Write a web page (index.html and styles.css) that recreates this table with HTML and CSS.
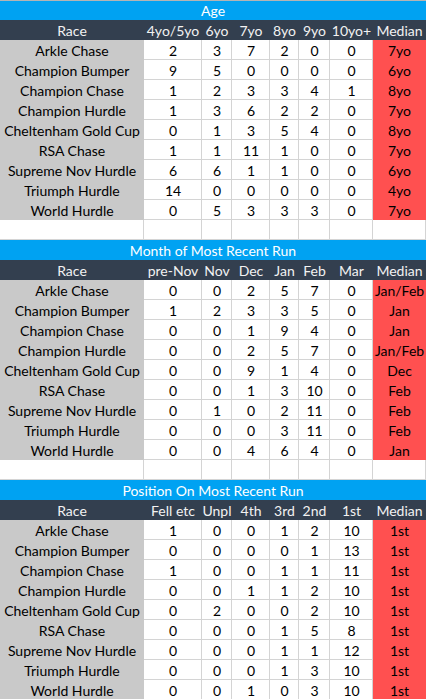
FILE: index.html
```html
<!DOCTYPE html>
<html>
<head>
<meta charset="utf-8">
<link rel="stylesheet" href="styles.css">
</head>
<body>
<table class="sheet">
<colgroup>
<col class="c-race"><col class="c1"><col class="c2"><col class="c3"><col class="c4"><col class="c5"><col class="c6"><col class="c-med">
</colgroup>
<tbody>
<tr class="row first"><td colspan="8" class="title">Age</td></tr>
<tr class="row"><th class="head">Race</th><th class="head">4yo/5yo</th><th class="head">6yo</th><th class="head">7yo</th><th class="head">8yo</th><th class="head">9yo</th><th class="head">10yo+</th><th class="head">Median</th></tr>
<tr class="row"><td class="race">Arkle Chase</td><td class="num">2</td><td class="num">3</td><td class="num">7</td><td class="num">2</td><td class="num">0</td><td class="num">0</td><td class="med">7yo</td></tr>
<tr class="row"><td class="race">Champion Bumper</td><td class="num">9</td><td class="num">5</td><td class="num">0</td><td class="num">0</td><td class="num">0</td><td class="num">0</td><td class="med">6yo</td></tr>
<tr class="row"><td class="race">Champion Chase</td><td class="num">1</td><td class="num">2</td><td class="num">3</td><td class="num">3</td><td class="num">4</td><td class="num">1</td><td class="med">8yo</td></tr>
<tr class="row"><td class="race">Champion Hurdle</td><td class="num">1</td><td class="num">3</td><td class="num">6</td><td class="num">2</td><td class="num">2</td><td class="num">0</td><td class="med">7yo</td></tr>
<tr class="row"><td class="race">Cheltenham Gold Cup</td><td class="num">0</td><td class="num">1</td><td class="num">3</td><td class="num">5</td><td class="num">4</td><td class="num">0</td><td class="med">8yo</td></tr>
<tr class="row"><td class="race">RSA Chase</td><td class="num">1</td><td class="num">1</td><td class="num">11</td><td class="num">1</td><td class="num">0</td><td class="num">0</td><td class="med">7yo</td></tr>
<tr class="row"><td class="race">Supreme Nov Hurdle</td><td class="num">6</td><td class="num">6</td><td class="num">1</td><td class="num">1</td><td class="num">0</td><td class="num">0</td><td class="med">6yo</td></tr>
<tr class="row"><td class="race">Triumph Hurdle</td><td class="num">14</td><td class="num">0</td><td class="num">0</td><td class="num">0</td><td class="num">0</td><td class="num">0</td><td class="med">4yo</td></tr>
<tr class="row"><td class="race">World Hurdle</td><td class="num">0</td><td class="num">5</td><td class="num">3</td><td class="num">3</td><td class="num">3</td><td class="num">0</td><td class="med">7yo</td></tr>
<tr class="row"><td class="blank"></td><td class="blank"></td><td class="blank"></td><td class="blank"></td><td class="blank"></td><td class="blank"></td><td class="blank"></td><td class="blank"></td></tr>

<tr class="row"><td colspan="8" class="title">Month of Most Recent Run</td></tr>
<tr class="row"><th class="head">Race</th><th class="head">pre-Nov</th><th class="head">Nov</th><th class="head">Dec</th><th class="head">Jan</th><th class="head">Feb</th><th class="head">Mar</th><th class="head">Median</th></tr>
<tr class="row"><td class="race">Arkle Chase</td><td class="num">0</td><td class="num">0</td><td class="num">2</td><td class="num">5</td><td class="num">7</td><td class="num">0</td><td class="med">Jan/Feb</td></tr>
<tr class="row"><td class="race">Champion Bumper</td><td class="num">1</td><td class="num">2</td><td class="num">3</td><td class="num">3</td><td class="num">5</td><td class="num">0</td><td class="med">Jan</td></tr>
<tr class="row"><td class="race">Champion Chase</td><td class="num">0</td><td class="num">0</td><td class="num">1</td><td class="num">9</td><td class="num">4</td><td class="num">0</td><td class="med">Jan</td></tr>
<tr class="row"><td class="race">Champion Hurdle</td><td class="num">0</td><td class="num">0</td><td class="num">2</td><td class="num">5</td><td class="num">7</td><td class="num">0</td><td class="med">Jan/Feb</td></tr>
<tr class="row"><td class="race">Cheltenham Gold Cup</td><td class="num">0</td><td class="num">0</td><td class="num">9</td><td class="num">1</td><td class="num">4</td><td class="num">0</td><td class="med">Dec</td></tr>
<tr class="row"><td class="race">RSA Chase</td><td class="num">0</td><td class="num">0</td><td class="num">1</td><td class="num">3</td><td class="num">10</td><td class="num">0</td><td class="med">Feb</td></tr>
<tr class="row"><td class="race">Supreme Nov Hurdle</td><td class="num">0</td><td class="num">1</td><td class="num">0</td><td class="num">2</td><td class="num">11</td><td class="num">0</td><td class="med">Feb</td></tr>
<tr class="row"><td class="race">Triumph Hurdle</td><td class="num">0</td><td class="num">0</td><td class="num">0</td><td class="num">3</td><td class="num">11</td><td class="num">0</td><td class="med">Feb</td></tr>
<tr class="row"><td class="race">World Hurdle</td><td class="num">0</td><td class="num">0</td><td class="num">4</td><td class="num">6</td><td class="num">4</td><td class="num">0</td><td class="med">Jan</td></tr>
<tr class="row"><td class="blank"></td><td class="blank"></td><td class="blank"></td><td class="blank"></td><td class="blank"></td><td class="blank"></td><td class="blank"></td><td class="blank"></td></tr>

<tr class="row"><td colspan="8" class="title">Position On Most Recent Run</td></tr>
<tr class="row"><th class="head">Race</th><th class="head">Fell etc</th><th class="head">Unpl</th><th class="head">4th</th><th class="head">3rd</th><th class="head">2nd</th><th class="head">1st</th><th class="head">Median</th></tr>
<tr class="row"><td class="race">Arkle Chase</td><td class="num">1</td><td class="num">0</td><td class="num">0</td><td class="num">1</td><td class="num">2</td><td class="num">10</td><td class="med">1st</td></tr>
<tr class="row"><td class="race">Champion Bumper</td><td class="num">0</td><td class="num">0</td><td class="num">0</td><td class="num">0</td><td class="num">1</td><td class="num">13</td><td class="med">1st</td></tr>
<tr class="row"><td class="race">Champion Chase</td><td class="num">1</td><td class="num">0</td><td class="num">0</td><td class="num">1</td><td class="num">1</td><td class="num">11</td><td class="med">1st</td></tr>
<tr class="row"><td class="race">Champion Hurdle</td><td class="num">0</td><td class="num">0</td><td class="num">1</td><td class="num">1</td><td class="num">2</td><td class="num">10</td><td class="med">1st</td></tr>
<tr class="row"><td class="race">Cheltenham Gold Cup</td><td class="num">0</td><td class="num">2</td><td class="num">0</td><td class="num">0</td><td class="num">2</td><td class="num">10</td><td class="med">1st</td></tr>
<tr class="row"><td class="race">RSA Chase</td><td class="num">0</td><td class="num">0</td><td class="num">0</td><td class="num">1</td><td class="num">5</td><td class="num">8</td><td class="med">1st</td></tr>
<tr class="row"><td class="race">Supreme Nov Hurdle</td><td class="num">0</td><td class="num">0</td><td class="num">0</td><td class="num">1</td><td class="num">1</td><td class="num">12</td><td class="med">1st</td></tr>
<tr class="row"><td class="race">Triumph Hurdle</td><td class="num">0</td><td class="num">0</td><td class="num">0</td><td class="num">1</td><td class="num">3</td><td class="num">10</td><td class="med">1st</td></tr>
<tr class="row"><td class="race">World Hurdle</td><td class="num">0</td><td class="num">0</td><td class="num">1</td><td class="num">0</td><td class="num">3</td><td class="num">10</td><td class="med">1st</td></tr>
</tbody>
</table>
</body>
</html>
```
FILE: styles.css
```css
html, body {
  margin: 0;
  padding: 0;
  overflow: hidden;
  background: #ffffff;
}

.sheet {
  width: 426px;
  table-layout: fixed;
  border-collapse: separate;
  border-spacing: 0;
  font-family: Lato, "Liberation Sans", sans-serif;
  font-size: 14px;
  color: #000000;
}

.c-race { width: 144px; }
.c1 { width: 58px; }
.c2 { width: 30px; }
.c3 { width: 38px; }
.c4 { width: 29px; }
.c5 { width: 31px; }
.c6 { width: 43px; }
.c-med { width: 53px; }

.row { height: 20px; }

.sheet td,
.sheet th {
  height: 20px;
  padding: 2px 0 0 0;
  box-sizing: border-box;
  line-height: 18px;
  text-align: center;
  white-space: nowrap;
  overflow: hidden;
  font-weight: normal;
}

.title {
  background: #00a2f2;
  color: #ffffff;
}

.first .title {
  box-shadow: inset 0 1px 0 #b4b4b4;
}

.head {
  background: #333f4f;
  color: #f2f2f2;
}

.race {
  background: #c9c9c9;
}

.num,
.blank {
  background: #ffffff;
  box-shadow: inset -1px -1px 0 #d4d4d4;
}

.med {
  background: #ff5050;
}
```
